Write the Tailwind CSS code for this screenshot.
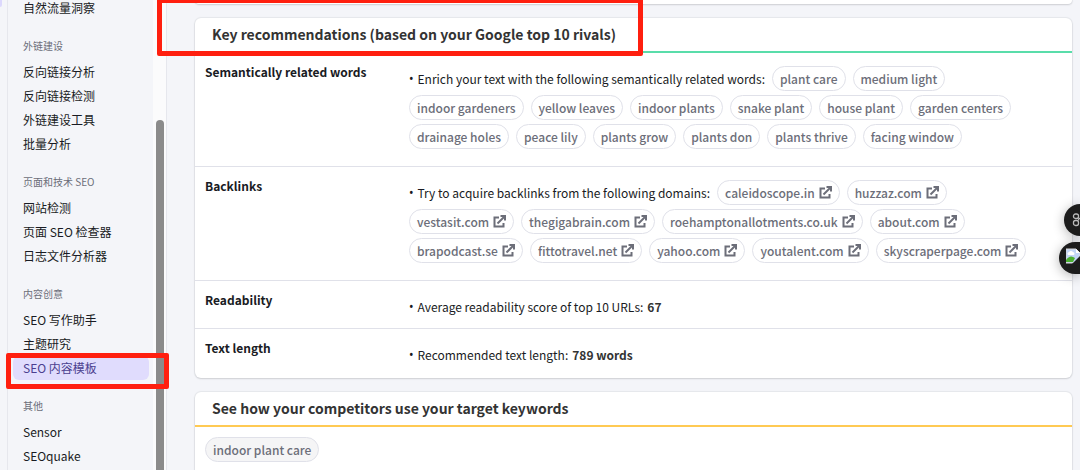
<!DOCTYPE html>
<html lang="zh-CN">
<head>
  <meta charset="UTF-8" />
  <meta name="viewport" content="width=device-width, initial-scale=1.0" />
  <title>SEO 内容模板</title>
  <script src="https://cdn.jsdelivr.net/npm/@tailwindcss/browser@4"></script>
</head>
<body class="relative flex h-screen overflow-hidden bg-[#f4f5f9] font-['Noto_Sans_CJK_SC',sans-serif] text-[12px] text-[#191b23]">

  <!-- Shared icon -->
  <svg class="hidden">
    <symbol id="external" viewBox="0 0 13 13">
      <path d="M6 2.500H1.500V11.500H10.500V8" fill="none" stroke="currentColor" stroke-width="2" />
      <path d="M4.500 8.500L11 2" fill="none" stroke="currentColor" stroke-width="2" />
      <path d="M7.500 0H13V5.500H11V2H7.500Z" fill="currentColor" />
    </symbol>
  </svg>

  <!-- Collapsed rail -->
  <div class="w-2 shrink-0 border-r border-[#e6e7ed]">
    <div class="h-[7px] w-[2px] rounded-br bg-[#dcd8fd]"></div>
  </div>

  <!-- Sidebar -->
  <aside class="flex w-[159px] shrink-0 border-r border-[#e6e7ed]">
    <nav class="-mt-1 flex-1 pl-[5px] pr-1 leading-6">
      <a href="#" class="block rounded-md pl-[10px]">自然流量洞察</a>

      <h3 class="mt-4 mb-1 pl-[10px] text-[10px] leading-5 text-[#6c6e79]">外链建设</h3>
      <a href="#" class="block rounded-md pl-[10px]">反向链接分析</a>
      <a href="#" class="block rounded-md pl-[10px]">反向链接检测</a>
      <a href="#" class="block rounded-md pl-[10px]">外链建设工具</a>
      <a href="#" class="block rounded-md pl-[10px]">批量分析</a>

      <h3 class="mt-4 mb-1 pl-[10px] text-[10px] leading-5 text-[#6c6e79]">页面和技术 SEO</h3>
      <a href="#" class="block rounded-md pl-[10px]">网站检测</a>
      <a href="#" class="block rounded-md pl-[10px]">页面 SEO 检查器</a>
      <a href="#" class="block rounded-md pl-[10px]">日志文件分析器</a>

      <h3 class="mt-4 mb-1 pl-[10px] text-[10px] leading-5 text-[#6c6e79]">内容创意</h3>
      <a href="#" class="block rounded-md pl-[10px]">SEO 写作助手</a>
      <a href="#" class="block rounded-md pl-[10px]">主题研究</a>
      <a href="#" class="block rounded-md bg-[#e0dcfd] pl-[10px] text-[#4b3f8f]">SEO 内容模板</a>

      <h3 class="mt-4 mb-1 pl-[10px] text-[10px] leading-5 text-[#6c6e79]">其他</h3>
      <a href="#" class="block rounded-md pl-[10px]">Sensor</a>
      <a href="#" class="block rounded-md pl-[10px]">SEOquake</a>
    </nav>
    <!-- Scrollbar -->
    <div class="w-[13px] bg-[#fbfbfc] pt-[120px] pl-[3px]">
      <div class="h-full w-2 rounded-t bg-[#8b8b8b]"></div>
    </div>
  </aside>

  <!-- Content -->
  <main class="min-w-0 flex-1 pr-2 pl-7">
    <div class="h-1 rounded-b-md bg-white shadow-[0_0_1px_1px_rgba(25,27,35,0.06),0_1px_2px_rgba(25,27,35,0.12)]"></div>

    <section class="mt-[14px] rounded-md bg-white shadow-[0_0_1px_1px_rgba(25,27,35,0.06),0_1px_2px_rgba(25,27,35,0.12)]">
      <h2 class="border-b-2 border-[#59ddaa] pl-[17px] text-[14px] leading-[33px] font-bold text-[#333]">Key recommendations (based on your Google top 10 rivals)</h2>
      <dl>
        <div class="flex border-b border-[#e0e1e9] pt-[9px] pb-[17px]">
          <dt class="w-[214px] shrink-0 pl-[10px] leading-5 font-bold">Semantically related words</dt>
          <dd class="mt-1 flex max-w-[640px] flex-wrap gap-x-[7px] gap-y-1 leading-[25px]">
            <span class="flex gap-1"><span class="font-['Noto_Sans']">•</span>Enrich your text with the following semantically related words:</span>
            <span class="h-[25px] rounded-full border border-[#e0e1e9] px-[7px] leading-[23px] font-medium text-[#6c6e79]">plant care</span>
            <span class="h-[25px] rounded-full border border-[#e0e1e9] px-[7px] leading-[23px] font-medium text-[#6c6e79]">medium light</span>
            <span class="h-[25px] rounded-full border border-[#e0e1e9] px-[7px] leading-[23px] font-medium text-[#6c6e79]">indoor gardeners</span>
            <span class="h-[25px] rounded-full border border-[#e0e1e9] px-[7px] leading-[23px] font-medium text-[#6c6e79]">yellow leaves</span>
            <span class="h-[25px] rounded-full border border-[#e0e1e9] px-[7px] leading-[23px] font-medium text-[#6c6e79]">indoor plants</span>
            <span class="h-[25px] rounded-full border border-[#e0e1e9] px-[7px] leading-[23px] font-medium text-[#6c6e79]">snake plant</span>
            <span class="h-[25px] rounded-full border border-[#e0e1e9] px-[7px] leading-[23px] font-medium text-[#6c6e79]">house plant</span>
            <span class="h-[25px] rounded-full border border-[#e0e1e9] px-[7px] leading-[23px] font-medium text-[#6c6e79]">garden centers</span>
            <span class="h-[25px] rounded-full border border-[#e0e1e9] px-[7px] leading-[23px] font-medium text-[#6c6e79]">drainage holes</span>
            <span class="h-[25px] rounded-full border border-[#e0e1e9] px-[7px] leading-[23px] font-medium text-[#6c6e79]">peace lily</span>
            <span class="h-[25px] rounded-full border border-[#e0e1e9] px-[7px] leading-[23px] font-medium text-[#6c6e79]">plants grow</span>
            <span class="h-[25px] rounded-full border border-[#e0e1e9] px-[7px] leading-[23px] font-medium text-[#6c6e79]">plants don</span>
            <span class="h-[25px] rounded-full border border-[#e0e1e9] px-[7px] leading-[23px] font-medium text-[#6c6e79]">plants thrive</span>
            <span class="h-[25px] rounded-full border border-[#e0e1e9] px-[7px] leading-[23px] font-medium text-[#6c6e79]">facing window</span>
          </dd>
        </div>

        <div class="flex border-b border-[#e0e1e9] pt-[9px] pb-[17px]">
          <dt class="w-[214px] shrink-0 pl-[10px] leading-5 font-bold">Backlinks</dt>
          <dd class="mt-1 flex max-w-[640px] flex-wrap gap-x-[7px] gap-y-1 leading-[25px]">
            <span class="flex gap-1"><span class="font-['Noto_Sans']">•</span>Try to acquire backlinks from the following domains:</span>
            <a href="#" class="flex h-[25px] items-center gap-1 rounded-full border border-[#e0e1e9] px-[7px] leading-[23px] font-medium text-[#6c6e79]">caleidoscope.in<svg class="size-[13px]"><use href="#external" /></svg></a>
            <a href="#" class="flex h-[25px] items-center gap-1 rounded-full border border-[#e0e1e9] px-[7px] leading-[23px] font-medium text-[#6c6e79]">huzzaz.com<svg class="size-[13px]"><use href="#external" /></svg></a>
            <a href="#" class="flex h-[25px] items-center gap-1 rounded-full border border-[#e0e1e9] px-[7px] leading-[23px] font-medium text-[#6c6e79]">vestasit.com<svg class="size-[13px]"><use href="#external" /></svg></a>
            <a href="#" class="flex h-[25px] items-center gap-1 rounded-full border border-[#e0e1e9] px-[7px] leading-[23px] font-medium text-[#6c6e79]">thegigabrain.com<svg class="size-[13px]"><use href="#external" /></svg></a>
            <a href="#" class="flex h-[25px] items-center gap-1 rounded-full border border-[#e0e1e9] px-[7px] leading-[23px] font-medium text-[#6c6e79]">roehamptonallotments.co.uk<svg class="size-[13px]"><use href="#external" /></svg></a>
            <a href="#" class="flex h-[25px] items-center gap-1 rounded-full border border-[#e0e1e9] px-[7px] leading-[23px] font-medium text-[#6c6e79]">about.com<svg class="size-[13px]"><use href="#external" /></svg></a>
            <a href="#" class="flex h-[25px] items-center gap-1 rounded-full border border-[#e0e1e9] px-[7px] leading-[23px] font-medium text-[#6c6e79]">brapodcast.se<svg class="size-[13px]"><use href="#external" /></svg></a>
            <a href="#" class="flex h-[25px] items-center gap-1 rounded-full border border-[#e0e1e9] px-[7px] leading-[23px] font-medium text-[#6c6e79]">fittotravel.net<svg class="size-[13px]"><use href="#external" /></svg></a>
            <a href="#" class="flex h-[25px] items-center gap-1 rounded-full border border-[#e0e1e9] px-[7px] leading-[23px] font-medium text-[#6c6e79]">yahoo.com<svg class="size-[13px]"><use href="#external" /></svg></a>
            <a href="#" class="flex h-[25px] items-center gap-1 rounded-full border border-[#e0e1e9] px-[7px] leading-[23px] font-medium text-[#6c6e79]">youtalent.com<svg class="size-[13px]"><use href="#external" /></svg></a>
            <a href="#" class="flex h-[25px] items-center gap-1 rounded-full border border-[#e0e1e9] px-[7px] leading-[23px] font-medium text-[#6c6e79]">skyscraperpage.com<svg class="size-[13px]"><use href="#external" /></svg></a>
          </dd>
        </div>

        <div class="flex border-b border-[#e0e1e9] pt-[9px] pb-[9px]">
          <dt class="w-[214px] shrink-0 pl-[10px] leading-5 font-bold">Readability</dt>
          <dd class="mt-1 flex gap-1 leading-[25px]"><span class="font-['Noto_Sans']">•</span>Average readability score of top 10 URLs: <b class="font-bold text-[#333]">67</b></dd>
        </div>

        <div class="flex pt-[9px] pb-[11px]">
          <dt class="w-[214px] shrink-0 pl-[10px] leading-5 font-bold">Text length</dt>
          <dd class="mt-1 flex gap-1 leading-[25px]"><span class="font-['Noto_Sans']">•</span>Recommended text length: <b class="font-bold text-[#333]">789 words</b></dd>
        </div>
      </dl>
    </section>

    <section class="mt-[14px] rounded-t-md bg-white pb-2 shadow-[0_0_1px_1px_rgba(25,27,35,0.06),0_1px_2px_rgba(25,27,35,0.12)]">
      <h2 class="border-b-2 border-[#ffca53] pl-[17px] text-[14px] leading-[33px] font-bold text-[#333]">See how your competitors use your target keywords</h2>
      <button type="button" class="mt-[10px] ml-[10px] h-[25px] rounded-full border border-[#e0e1e9] bg-[#f5f5f6] px-[7px] leading-[23px] font-medium text-[#6c6e79]">indoor plant care</button>
    </section>
  </main>

  <!-- Floating extension buttons -->
  <button type="button" aria-label="Shortcuts" class="absolute top-[204px] right-0 flex h-8 w-4 items-center overflow-hidden rounded-l-full bg-[#1c1c1c] pl-2 shadow-[0_2px_12px_rgba(0,0,0,0.3)]">
    <svg class="size-4 shrink-0" viewBox="0 0 16 16" fill="none" stroke="#b9b9b9" stroke-width="1.3">
      <rect x="1.500" y="2" width="5" height="4.500" rx="2" />
      <rect x="1.500" y="8.500" width="5" height="5" rx="2" />
      <path d="M6.500 6.500V8.500M6.500 6.500H8" />
    </svg>
  </button>
  <button type="button" aria-label="Assistant" class="absolute top-[242px] right-0 flex h-8 w-[21px] items-center rounded-l-full bg-[#1c1c1c] pl-[7px] shadow-[0_2px_12px_rgba(0,0,0,0.3)]">
    <svg class="mb-1 h-4 w-[14px]" viewBox="0 0 14 16">
      <path d="M0 1H10L14 5V15H0Z" fill="#c3d5f7" stroke="#d8d8d8" />
      <path d="M2 7a2 2 0 0 1 1-3 2.500 2.500 0 0 1 4 0 2 2 0 0 1 1 3Z" fill="#fff" />
      <path d="M0 14V12Q4 6 9 10L7 14Z" fill="#4caf32" />
      <path d="M6 16L14 8V16H6Z" fill="#1c1c1c" />
      <path d="M10 1V5H14Z" fill="#fff" />
    </svg>
  </button>

  <!-- Highlight frames -->
  <div class="pointer-events-none absolute -top-[2px] left-[157px] h-[58px] w-[486px] rounded-xs border-[5px] border-[#ff1f0f]"></div>
  <div class="pointer-events-none absolute top-[353px] left-[6px] h-[36px] w-[163px] rounded-xs border-[5px] border-[#ff1f0f]"></div>

</body>
</html>
